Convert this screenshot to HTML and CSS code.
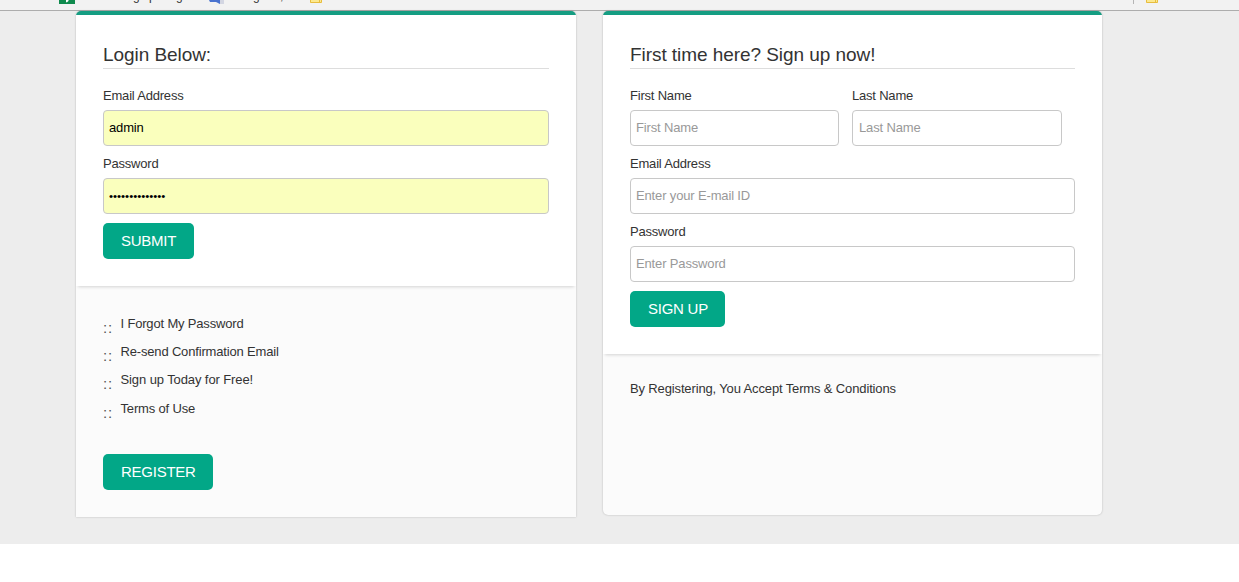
FILE: index.html
```
<!DOCTYPE html>
<html lang="en">
<head>
<meta charset="utf-8">
<title>Login</title>
<link rel="stylesheet" href="styles.css">
</head>
<body>
<div class="bookmarks">
  <svg class="sheet" width="16" height="4" viewBox="0 0 16 4"><path fill="#0f8a4d" d="M0 0h16v4H0z"/><path fill="#fff" d="M7 0h2.500v1L8 2.200H7z"/></svg>
  <span class="mark m1">g</span><span class="mark m2">p</span><span class="mark m3">g</span>
  <svg class="photo" width="17" height="4" viewBox="0 0 17 4"><path fill="#d3d6e2" d="M9 0h7v4h-5z"/><path fill="#4a73cf" d="M1 0h11v4L8 2H2z"/></svg>
  <span class="mark m4">g</span><span class="mark m5">,</span>
  <svg class="folder f1" width="12" height="3" viewBox="0 0 12 3"><path fill="#fce98f" stroke="#e8bd3e" d="M.5-1v3.500h11V-1M9.500-1v3"/></svg>
  <span class="divider"></span>
  <svg class="folder f2" width="12" height="3" viewBox="0 0 12 3"><path fill="#fce98f" stroke="#e8bd3e" d="M.5-1v3.500h11V-1M9.500-1v3"/></svg>
</div>
<main class="page">
  <section class="card login">
    <form class="panel">
      <h1>Login Below:</h1>
      <div class="field"><label for="user">Email Address</label><input id="user" class="filled" type="text" value="admin"></div>
      <div class="field"><label for="pass">Password</label><input id="pass" class="filled dots" type="text" value="••••••••••••••"></div>
      <button class="btn submit" type="button">SUBMIT</button>
    </form>
    <div class="extra">
      <ul class="links">
        <li><a>I Forgot My Password</a></li>
        <li><a>Re-send Confirmation Email</a></li>
        <li><a>Sign up Today for Free!</a></li>
        <li><a>Terms of Use</a></li>
      </ul>
      <button class="btn register" type="button">REGISTER</button>
    </div>
  </section>
  <section class="card signup">
    <form class="panel">
      <h1>First time here? Sign up now!</h1>
      <div class="names">
        <div class="field"><label for="first">First Name</label><input id="first" type="text" placeholder="First Name"></div>
        <div class="field"><label for="last">Last Name</label><input id="last" type="text" placeholder="Last Name"></div>
      </div>
      <div class="field"><label for="mail">Email Address</label><input id="mail" type="text" placeholder="Enter your E-mail ID"></div>
      <div class="field"><label for="newpass">Password</label><input id="newpass" type="text" placeholder="Enter Password"></div>
      <button class="btn signup-btn" type="button">SIGN UP</button>
    </form>
    <div class="extra"><p class="terms">By Registering, You Accept Terms &amp; Conditions</p></div>
  </section>
</main>
</body>
</html>
```

FILE: styles.css
```
* { box-sizing: border-box; }
body { margin: 0; background: #fff; color: #333; font: 13px/18px "Liberation Sans", Arial, sans-serif; letter-spacing: -.14px; overflow: hidden; }
.bookmarks { display: flex; align-items: flex-start; height: 11px; background: #f2f2f2; border-bottom: 1px solid #adadad; overflow: hidden; padding-left: 59px; }
.bookmarks svg { flex: none; }
.mark { width: 8px; font-size: 12px; line-height: 14px; margin-top: -11px; color: #333; }
.m1 { margin-left: 58px; }
.m2 { margin-left: 8px; }
.m3 { margin-left: 19px; }
.photo { margin-left: 24px; }
.m4 { margin-left: 28px; }
.m5 { margin-left: 19px; }
.f1 { margin-left: 22px; }
.divider { width: 1px; height: 4px; background: #b5b5b5; margin-left: 811px; }
.f2 { margin-left: 12px; }
.page { display: flex; align-items: flex-start; gap: 27px; height: 533px; padding-left: 76px; background: #ededed; }
.card { display: flex; flex-direction: column; background: #fbfbfb; border-top: 4px solid #159d82; border-radius: 5px; box-shadow: 0 0 2px rgba(0,0,0,.25); }
.login { width: 500px; height: 506px; border-radius: 5px 5px 0 0; }
.signup { width: 499px; height: 504px; }
.panel { background: #fff; padding: 27px; box-shadow: 0 3px 3px -2px rgba(0,0,0,.16); }
h1 { height: 27px; margin: 0 0 18px; border-bottom: 1px solid #ddd; font-size: 19px; font-weight: 400; line-height: 26px; letter-spacing: -.06px; }
.field { display: flex; flex-direction: column; margin-bottom: 9px; }
label { height: 18px; margin-bottom: 5px; letter-spacing: -.2px; }
input { width: 100%; height: 36px; margin: 0; padding: 0 5px 1px; border: 1px solid #c8c8c8; border-radius: 4px; background: #fff; color: #000; font: inherit; letter-spacing: -.15px; }
.filled { background: #faffbd; }
.dots { font-size: 11.5px; letter-spacing: 0; }
input::placeholder { color: #999; opacity: 1; }
#last { padding-left: 6px; }
.names { display: grid; grid-template-columns: 209px 210px; gap: 13px; }
.btn { display: block; height: 36px; padding: 0 0 0 18px; border: 0; border-radius: 5px; background: #02a787; color: #fff; font: 15px/36px "Liberation Sans", Arial, sans-serif; letter-spacing: -.25px; text-align: left; }
.submit { width: 91px; }
.register { width: 110px; }
.signup-btn { width: 95px; }
.extra { padding: 29px 27px 27px; }
.signup .extra { padding-top: 26px; }
.links { list-style: none; margin: 0 0 26px; padding: 0; }
.links li { display: flex; height: 28.25px; letter-spacing: -.17px; }
.links li:nth-child(3) { margin-top: -.5px; margin-bottom: .5px; letter-spacing: -.1px; }
.links li::before { content: "::"; width: 18px; padding: 4px 0 0; margin-right: -.5px; font-size: 15px; line-height: 18px; letter-spacing: .8px; color: #555; }
.terms { margin: 0; }
```
